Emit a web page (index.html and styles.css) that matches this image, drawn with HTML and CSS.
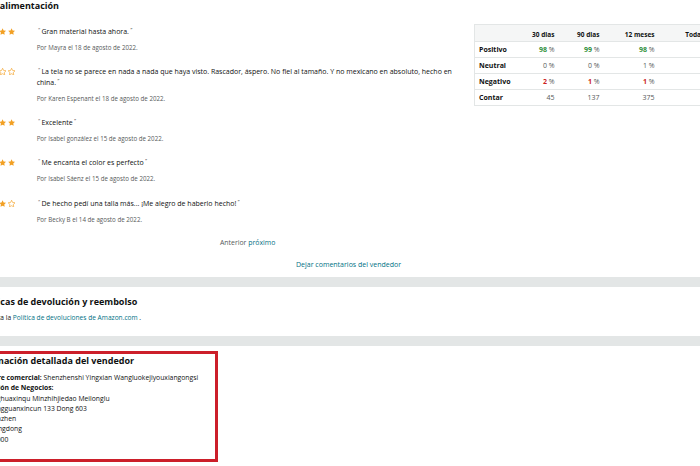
FILE: index.html
```html
<!DOCTYPE html>
<html lang="es">
<head>
<meta charset="utf-8">
<title>Vendedor</title>
<link rel="stylesheet" href="styles.css">
</head>
<body>
<svg width="0" height="0" class="defs" aria-hidden="true">
  <defs>
    <path id="star" d="M5 .4l1.45 3.05 3.3.45-2.4 2.3.6 3.3L5 7.95 2.05 9.5l.6-3.3L.25 3.9l3.3-.45z"/>
  </defs>
</svg>
<div class="page">
  <section class="feedback">
    <div class="feedback-main">
      <h2 class="title">Retroalimentación</h2>
      <ul class="reviews">
        <li class="review">
          <div class="stars">
            <svg viewBox="0 0 10 10"><use href="#star" class="on"/></svg><svg viewBox="0 0 10 10"><use href="#star" class="on"/></svg><svg viewBox="0 0 10 10"><use href="#star" class="on"/></svg><svg viewBox="0 0 10 10"><use href="#star" class="on"/></svg><svg viewBox="0 0 10 10"><use href="#star" class="on"/></svg>
          </div>
          <div class="review-body">
            <p class="review-text"><span class="q">“</span>Gran material hasta ahora.<span class="q">”</span></p>
            <p class="review-meta">Por Mayra el 18 de agosto de 2022.</p>
          </div>
        </li>
        <li class="review">
          <div class="stars">
            <svg viewBox="0 0 10 10"><use href="#star" class="on"/></svg><svg viewBox="0 0 10 10"><use href="#star" class="off"/></svg><svg viewBox="0 0 10 10"><use href="#star" class="off"/></svg><svg viewBox="0 0 10 10"><use href="#star" class="off"/></svg><svg viewBox="0 0 10 10"><use href="#star" class="off"/></svg>
          </div>
          <div class="review-body">
            <p class="review-text"><span class="q">“</span>La tela no se parece en nada a nada que haya visto. Rascador, áspero. No fiel al tamaño. Y no mexicano en absoluto, hecho en china.<span class="q">”</span></p>
            <p class="review-meta">Por Karen Espenant el 18 de agosto de 2022.</p>
          </div>
        </li>
        <li class="review">
          <div class="stars">
            <svg viewBox="0 0 10 10"><use href="#star" class="on"/></svg><svg viewBox="0 0 10 10"><use href="#star" class="on"/></svg><svg viewBox="0 0 10 10"><use href="#star" class="on"/></svg><svg viewBox="0 0 10 10"><use href="#star" class="on"/></svg><svg viewBox="0 0 10 10"><use href="#star" class="on"/></svg>
          </div>
          <div class="review-body">
            <p class="review-text"><span class="q">“</span>Excelente<span class="q">”</span></p>
            <p class="review-meta">Por Isabel gonzález el 15 de agosto de 2022.</p>
          </div>
        </li>
        <li class="review">
          <div class="stars">
            <svg viewBox="0 0 10 10"><use href="#star" class="on"/></svg><svg viewBox="0 0 10 10"><use href="#star" class="on"/></svg><svg viewBox="0 0 10 10"><use href="#star" class="on"/></svg><svg viewBox="0 0 10 10"><use href="#star" class="on"/></svg><svg viewBox="0 0 10 10"><use href="#star" class="on"/></svg>
          </div>
          <div class="review-body">
            <p class="review-text"><span class="q">“</span>Me encanta el color es perfecto<span class="q">”</span></p>
            <p class="review-meta">Por Isabel Sáenz el 15 de agosto de 2022.</p>
          </div>
        </li>
        <li class="review">
          <div class="stars">
            <svg viewBox="0 0 10 10"><use href="#star" class="on"/></svg><svg viewBox="0 0 10 10"><use href="#star" class="on"/></svg><svg viewBox="0 0 10 10"><use href="#star" class="on"/></svg><svg viewBox="0 0 10 10"><use href="#star" class="on"/></svg><svg viewBox="0 0 10 10"><use href="#star" class="off"/></svg>
          </div>
          <div class="review-body">
            <p class="review-text"><span class="q">“</span>De hecho pedí una talla más... ¡Me alegro de haberlo hecho!<span class="q">”</span></p>
            <p class="review-meta">Por Becky B el 14 de agosto de 2022.</p>
          </div>
        </li>
      </ul>
      <div class="pager"><span class="pager-prev">Anterior</span> <a class="link" href="#">próximo</a></div>
      <div class="leave"><a class="link" href="#">Dejar comentarios del vendedor</a></div>
    </div>
    <table class="summary">
      <thead>
        <tr><th></th><th>30 dias</th><th>90 dias</th><th>12 meses</th><th>Toda la vida</th></tr>
      </thead>
      <tbody>
        <tr><td class="label">Positivo</td><td><span class="pos">98</span> %</td><td><span class="pos">99</span> %</td><td><span class="pos">98</span> %</td><td><span class="pos">98</span> %</td></tr>
        <tr><td class="label">Neutral</td><td>0 %</td><td>0 %</td><td>1 %</td><td>1 %</td></tr>
        <tr><td class="label">Negativo</td><td><span class="neg">2</span> %</td><td><span class="neg">1</span> %</td><td><span class="neg">1</span> %</td><td><span class="neg">1</span> %</td></tr>
        <tr><td class="label">Contar</td><td>45</td><td>137</td><td>375</td><td>1.021</td></tr>
      </tbody>
    </table>
  </section>

  <div class="divider"></div>

  <section class="returns">
    <h2 class="title">Políticas de devolución y reembolso</h2>
    <p class="returns-text">Consulta la <a class="link" href="#">Política de devoluciones de Amazon.com</a> .</p>
  </section>

  <div class="divider"></div>

  <section class="seller">
    <div class="seller-box">
      <h2 class="title">Información detallada del vendedor</h2>
      <ul class="seller-info">
        <li><b>Nombre comercial:</b> Shenzhenshi Yingxian Wangluokejiyouxiangongsi</li>
        <li><b>Dirección de Negocios:</b></li>
        <li class="addr">Longhuaxinqu Minzhihjiedao Meilonglu</li>
        <li class="addr">Shangguanxincun 133 Dong 603</li>
        <li class="addr">Shenzhen</li>
        <li class="addr">Guangdong</li>
        <li class="addr">518000</li>
      </ul>
    </div>
  </section>
</div>
</body>
</html>
```

FILE: styles.css
```css
* { box-sizing: border-box; }
html, body { margin: 0; padding: 0; background: #fff; }
body {
  width: 700px;
  height: 466px;
  overflow: hidden;
  font-family: "Open Sans", "Noto Sans", sans-serif;
  color: #0f1111;
}
.defs { position: absolute; }
.page { margin-left: -40px; width: 780px; }
p, ul, h2 { margin: 0; padding: 0; }
ul { list-style: none; }
.link { color: #007185; text-decoration: none; }

.title {
  font-size: 9px;
  font-weight: 700;
  line-height: 12px;
  color: #0f1111;
}

/* feedback */
.feedback { display: flex; align-items: flex-start; }
.feedback-main { width: 514px; padding-left: 13px; }
.feedback-main .title { margin-left: 2px; }
.reviews { margin-top: 13.5px; }
.review { display: flex; align-items: flex-start; margin-bottom: 13.3px; }
.review:last-child { margin-bottom: 12.3px; }
.stars { display: flex; gap: 1.6px; width: 64px; padding-top: 2px; }
.stars svg { width: 7.2px; height: 7.2px; display: block; }
.stars .on { fill: #f2a024; }
.stars .off { fill: #fff; stroke: #f2a024; stroke-width: .9; }
.review-body { width: 440px; }
.review-text { font-size: 7px; line-height: 11px; color: #0f1111; }
.q { font-size: 5px; line-height: 0; position: relative; top: -2px; color: #333; padding: 0 1.5px; }
.review-meta { font-size: 6.2px; line-height: 10px; margin-top: 6px; color: #565959; }
.pager { font-size: 6.9px; line-height: 11px; padding-left: 247px; margin-top: 0; color: #565959; }
.leave { font-size: 7px; line-height: 11px; padding-left: 323px; margin-top: 11px; }

.summary {
  margin-top: 24px;
  border-collapse: collapse;
  font-size: 7px;
  color: #0f1111;
  border: 1px solid #e3e6e6;
}
.summary th, .summary td {
  height: 16px;
  padding: 0 6px;
  text-align: right;
  border-bottom: 1px solid #e3e6e6;
  white-space: nowrap;
}
.summary thead th { background: #f5f6f6; font-weight: 700; font-size: 6.5px; height: 17px; padding-top: 3px; }
.summary th:nth-child(1) { width: 50px; }
.summary th:nth-child(2) { width: 36px; }
.summary th:nth-child(3) { width: 45px; }
.summary th:nth-child(4) { width: 55px; }
.summary th:nth-child(5) { width: 70px; }
.summary td { color: #565959; }
.summary .label { text-align: left; font-weight: 700; font-size: 7px; color: #0f1111; padding-left: 4px; }
.pos { color: #2f8f3a; font-weight: 700; }
.neg { color: #cc1f1f; font-weight: 700; }

.divider { height: 10px; background: #e3e6e6; }
.feedback + .divider { margin-top: 7px; }

.returns { padding: 9px 0 13px 17px; }
.returns-text { font-size: 6.6px; line-height: 10px; margin-top: 5px; color: #0f1111; }

.seller { padding-top: 5px; }
.seller-box {
  width: 258px;
  height: 111px;
  border: 3px solid #cc1f2a;
  padding: 0 0 0 14px;
}
.seller-box .title { margin-left: -4px; line-height: 13px; }
.seller-info { margin-top: 6px; font-size: 6.8px; line-height: 10.3px; color: #0f1111; }
.seller-info b { font-weight: 700; }
.seller-info .addr { padding-left: 8px; }
```
